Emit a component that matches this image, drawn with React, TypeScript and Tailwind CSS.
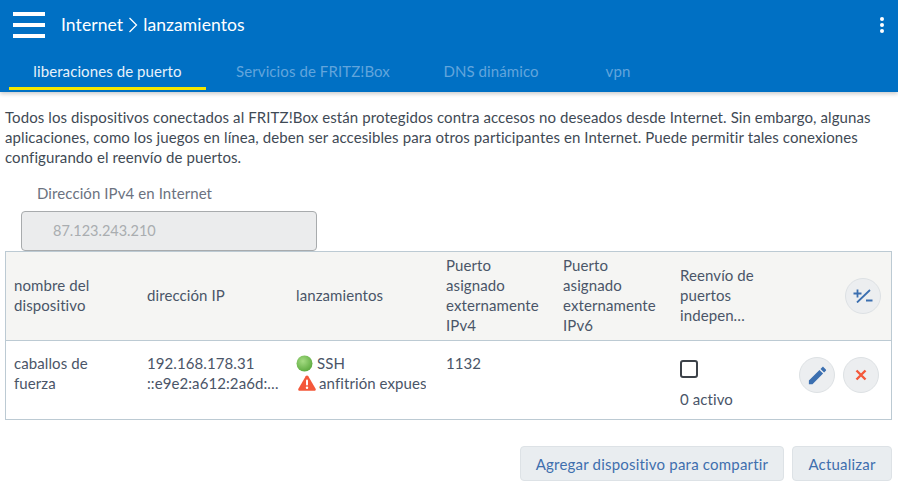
const tabs = [
  { label: 'liberaciones de puerto', width: 'w-[197px]', active: true },
  { label: 'Servicios de FRITZ!Box', width: 'w-[214px]', active: false },
  { label: 'DNS dinámico', width: 'w-[142px]', active: false },
  { label: 'vpn', width: 'w-[112px]', active: false },
];

const columns = 'grid grid-cols-[133px_149px_150px_117px_117px_119px_1fr] pl-[8px]';

function RoundButton({ children }: { children: React.ReactNode }) {
  return (
    <button className="w-9 h-9 rounded-full bg-[#eceef0] border border-[#dde1e4] flex items-center justify-center">
      {children}
    </button>
  );
}

function GreenDot() {
  return (
    <svg width="17" height="17" viewBox="0 0 17 17" className="shrink-0">
      <defs>
        <radialGradient id="led" cx="0.4" cy="0.35" r="0.7">
          <stop offset="0" stopColor="#a5dc83" />
          <stop offset="1" stopColor="#5aa83c" />
        </radialGradient>
      </defs>
      <circle cx="8.5" cy="8.5" r="8" fill="url(#led)" />
    </svg>
  );
}

function Warning() {
  return (
    <svg width="18" height="16" viewBox="0 0 18 16" className="shrink-0">
      <path d="M9 .5c.6 0 1 .3 1.300.8l7.300 12.500c.5.900-.1 2-1.200 2H1.600C.5 15.800-.1 14.700.4 13.800L7.700 1.300C8 .8 8.400.5 9 .5z" fill="#f4583a" />
      <rect x="8" y="4.500" width="2" height="6" rx="1" fill="#fff" />
      <circle cx="9" cy="12.800" r="1.200" fill="#fff" />
    </svg>
  );
}

export default function App() {
  return (
    <div className="w-[898px] h-[485px] overflow-hidden bg-white text-[15px] tracking-[0.09px] leading-5 text-[#4a5568] font-['Lato','Noto_Sans',sans-serif]">
      <header className="h-[92px] bg-[#0070c4] shadow-[0_2px_4px_rgba(0,0,0,0.2)] relative">
        <div className="h-[50px] flex items-center pl-[13px] pr-[14px]">
          <div className="w-8 flex flex-col gap-[7px]">
            <span className="h-1 bg-white" />
            <span className="h-1 bg-white" />
            <span className="h-1 bg-white" />
          </div>
          <h1 className="ml-4 text-[17.5px] text-white flex items-center">
            Internet
            <svg width="10" height="16" viewBox="0 0 10 16" className="mx-[5px]">
              <path d="M1.500 1l7 7-7 7" fill="none" stroke="#fff" strokeWidth="1.300" />
            </svg>
            lanzamientos
          </h1>
          <div className="ml-auto flex flex-col gap-[2px]">
            <span className="w-1 h-1 rounded-full bg-white" />
            <span className="w-1 h-1 rounded-full bg-white" />
            <span className="w-1 h-1 rounded-full bg-white" />
          </div>
        </div>
        <nav className="flex pl-[9px]">
          {tabs.map((tab) => (
            <div
              key={tab.label}
              className={`${tab.width} h-10 pt-[5px] border-b-[3px] flex items-center justify-center ${
                tab.active ? 'text-[#e8f2fa] border-[#f3e600]' : 'text-[#62a5dc] border-transparent'
              }`}
            >
              {tab.label}
            </div>
          ))}
        </nav>
      </header>

      <main className="px-[5px] pt-[15px]">
        <p className="text-[#3f4a55] whitespace-nowrap">
          Todos los dispositivos conectados al FRITZ!Box están protegidos contra accesos no deseados desde Internet. Sin embargo, algunas
          <br />
          aplicaciones, como los juegos en línea, deben ser accesibles para otros participantes en Internet. Puede permitir tales conexiones
          <br />
          configurando el reenvío de puertos.
        </p>

        <div className="ml-[32px] mt-[16px] text-[#6b7280]">Dirección IPv4 en Internet</div>
        <div className="ml-[16px] mt-[8px] w-[296px] h-10 rounded-[4px] bg-[#ebeced] border border-[#a8abad] flex items-center pl-[31px] text-[14.5px] tracking-normal text-[#a9adb0]">
          87.123.243.210
        </div>

        <div className="border border-[#bccad3] w-[887px]">
          <div className={`${columns} h-[89px] pb-[2px] bg-[#f5f5f3] items-center border-b border-[#bccad3]`}>
            <div>nombre del<br />dispositivo</div>
            <div>dirección IP</div>
            <div>lanzamientos</div>
            <div>Puerto<br />asignado<br />externamente<br />IPv4</div>
            <div>Puerto<br />asignado<br />externamente<br />IPv6</div>
            <div>Reenvío de<br />puertos<br />indepen…</div>
            <div className="flex justify-end pr-[10px] pt-[2px]">
              <RoundButton>
                <svg width="20" height="14" viewBox="0 0 20 14" fill="none" stroke="#3b6fb0" strokeWidth="1.800">
                  <path d="M.5 4.500h8M4.500.5v8M17 1L4 13.500M13 11.500h6.500" />
                </svg>
              </RoundButton>
            </div>
          </div>
          <div className={`${columns} h-[78px] pt-[12px]`}>
            <div>caballos de<br />fuerza</div>
            <div>
              192.168.178.31
              <div className="w-[133px] truncate">::e9e2:a612:2a6d:1234</div>
            </div>
            <div className="w-[130px] overflow-hidden whitespace-nowrap">
              <div className="flex items-center gap-[4px]"><GreenDot />SSH</div>
              <div className="flex items-center gap-[3px] ml-[2px]"><Warning />anfitrión expuesto</div>
            </div>
            <div>1132</div>
            <div />
            <div>
              <div className="w-[18px] h-[18px] mt-[7px] rounded-[3px] border-2 border-[#3c4249]" />
              <div className="mt-[11px]">0 activo</div>
            </div>
            <div className="flex justify-end gap-[8px] pr-[13px] pt-[4px]">
              <RoundButton>
                <svg width="23" height="23" viewBox="0 0 24 24" fill="#3b6fb0">
                  <path d="M3 17.250V21h3.750L17.810 9.940l-3.750-3.750L3 17.250zM20.710 7.040c.39-.39.39-1.020 0-1.410l-2.340-2.340c-.39-.39-1.020-.39-1.410 0l-1.830 1.830 3.750 3.750 1.830-1.830z" />
                </svg>
              </RoundButton>
              <RoundButton>
                <svg width="12" height="12" viewBox="0 0 12 12" fill="none" stroke="#f4583a" strokeWidth="2.400">
                  <path d="M1.500 1.500l9 9M10.500 1.500l-9 9" />
                </svg>
              </RoundButton>
            </div>
          </div>
        </div>

        <div className="flex justify-end gap-[8px] mt-[26px] w-[887px]">
          <button className="h-[35px] w-[264px] rounded-[4px] bg-[#e9edf0] border border-[#dde2e6] tracking-[0.2px] text-[#3f6fae]">
            Agregar dispositivo para compartir
          </button>
          <button className="h-[35px] w-[100px] rounded-[4px] bg-[#e9edf0] border border-[#dde2e6] tracking-[0.2px] text-[#3f6fae]">
            Actualizar
          </button>
        </div>
      </main>
    </div>
  );
}
